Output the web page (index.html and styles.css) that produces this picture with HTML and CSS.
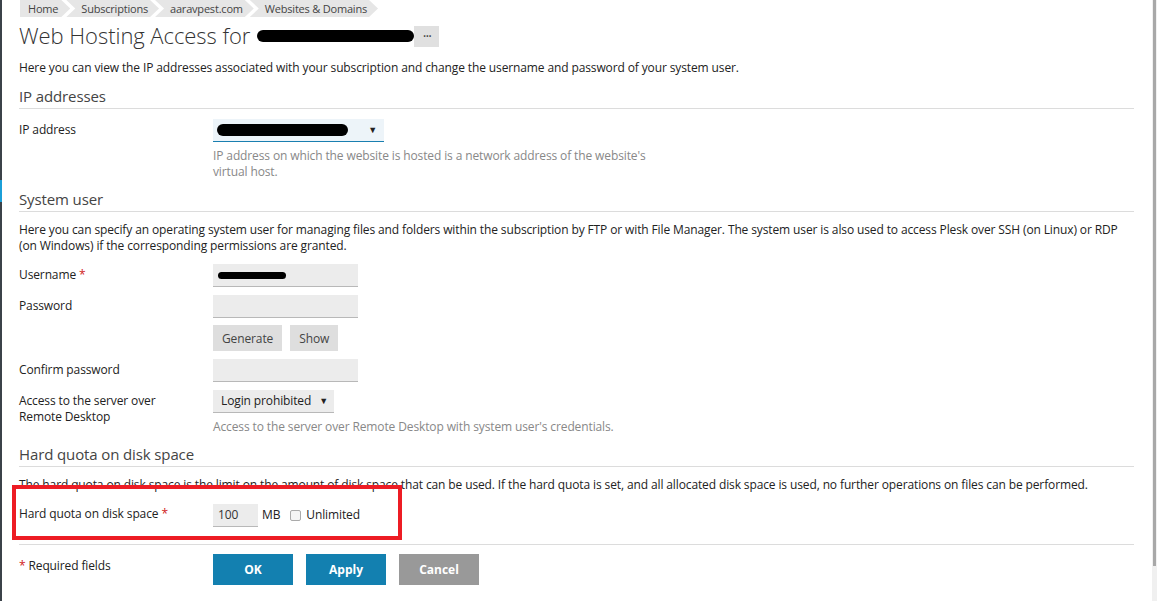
FILE: index.html
```html
<!DOCTYPE html>
<html lang="en">
<head>
    <meta charset="UTF-8">
    <title>Web Hosting Access</title>
    <link rel="stylesheet" href="styles.css">
</head>
<body>
    <div class="side-edge"><span class="side-active"></span></div>
    <div class="page">
        <ul class="breadcrumbs">
            <li>Home</li>
            <li>Subscriptions</li>
            <li>aaravpest.com</li>
            <li>Websites &amp; Domains</li>
        </ul>

        <h1 class="title">Web Hosting Access for <span class="redact title-redact"></span><span class="more">&middot;&middot;&middot;</span></h1>

        <p class="intro">Here you can view the IP addresses associated with your subscription and change the username and password of your system user.</p>

        <h2 class="section-title">IP addresses</h2>
        <div class="form-row">
            <label class="field-label">IP address</label>
            <div class="field">
                <div class="select select-ip"><span class="redact ip-redact"></span><span class="caret">&#9660;</span></div>
                <p class="hint">IP address on which the website is hosted is a network address of the website's<br>virtual host.</p>
            </div>
        </div>

        <h2 class="section-title">System user</h2>
        <p class="section-text">Here you can specify an operating system user for managing files and folders within the subscription by FTP or with File Manager. The system user is also used to access Plesk over SSH (on Linux) or RDP (on Windows) if the corresponding permissions are granted.</p>
        <div class="form-row">
            <label class="field-label">Username <span class="req">*</span></label>
            <div class="field"><div class="input"><span class="redact user-redact"></span></div></div>
        </div>
        <div class="form-row">
            <label class="field-label">Password</label>
            <div class="field">
                <div class="input"></div>
                <div class="btn-group">
                    <button class="btn">Generate</button>
                    <button class="btn">Show</button>
                </div>
            </div>
        </div>
        <div class="form-row">
            <label class="field-label">Confirm password</label>
            <div class="field"><div class="input"></div></div>
        </div>
        <div class="form-row">
            <label class="field-label">Access to the server over<br>Remote Desktop</label>
            <div class="field">
                <div class="select select-rdp">Login prohibited <span class="caret">&#9660;</span></div>
                <p class="hint">Access to the server over Remote Desktop with system user's credentials.</p>
            </div>
        </div>

        <h2 class="section-title">Hard quota on disk space</h2>
        <p class="section-text">The hard quota on disk space is the limit on the amount of disk space that can be used. If the hard quota is set, and all allocated disk space is used, no further operations on files can be performed.</p>
        <div class="form-row quota-row">
            <div class="highlight"></div>
            <label class="field-label">Hard quota on disk space <span class="req">*</span></label>
            <div class="field quota-field">
                <div class="input input-small">100</div>
                <span class="unit">MB</span>
                <span class="checkbox"></span>
                <span>Unlimited</span>
            </div>
        </div>

        <div class="form-footer">
            <div class="field-label"><span class="req">*</span> Required fields</div>
            <div class="actions">
                <button class="action primary">OK</button>
                <button class="action primary">Apply</button>
                <button class="action cancel">Cancel</button>
            </div>
        </div>
    </div>
    <div class="scrollbar"><div class="thumb"></div></div>
</body>
</html>
```

FILE: styles.css
```css
* {
    box-sizing: border-box;
    margin: 0;
    padding: 0;
}

body {
    font-family: "Open Sans", Arial, sans-serif;
    font-size: 12px;
    line-height: 16px;
    letter-spacing: -0.12px;
    color: #222;
    background-color: #fff;
    width: 1157px;
    height: 601px;
    overflow: hidden;
    position: relative;
}

.side-edge {
    position: absolute;
    left: 0;
    top: 0;
    width: 2px;
    height: 601px;
    background-color: #3b4249;
}

.side-active {
    position: absolute;
    left: 0;
    top: 180px;
    width: 2px;
    height: 22px;
    background-color: #1b9fd8;
}

.scrollbar {
    position: absolute;
    right: 0;
    top: 0;
    width: 5px;
    height: 601px;
    background-color: #f0f0f0;
}

.thumb {
    width: 3px;
    height: 566px;
    margin-left: 1px;
    background-color: #a8a8a8;
}

.page {
    padding-left: 19px;
    width: 1134px;
}

/* breadcrumbs */
.breadcrumbs {
    list-style: none;
    display: flex;
    height: 17px;
    margin-left: 1px;
}

.breadcrumbs li {
    background-color: #e6e6e6;
    color: #444;
    font-size: 11px;
    letter-spacing: -0.2px;
    line-height: 17px;
    padding: 0 11px 0 15px;
    margin-right: -4px;
    clip-path: polygon(0 0, calc(100% - 9px) 0, 100% 50%, calc(100% - 9px) 100%, 0 100%, 9px 50%);
}

.breadcrumbs li:first-child {
    padding-left: 8px;
    padding-right: 12px;
    clip-path: polygon(0 0, calc(100% - 9px) 0, 100% 50%, calc(100% - 9px) 100%, 0 100%);
}

/* title */
.title {
    font-size: 22px;
    font-weight: 300;
    color: #333;
    line-height: 28px;
    margin-top: 4px;
    display: flex;
    align-items: center;
    letter-spacing: -0.05px;
}

.redact {
    display: inline-block;
    background-color: #000;
    border-radius: 6px;
}

.title-redact {
    width: 157px;
    height: 12px;
    margin-left: 7px;
    margin-top: 2px;
}

.more {
    display: inline-block;
    width: 25px;
    height: 21px;
    background-color: #e0e0e0;
    color: #444;
    font-size: 14px;
    font-weight: 400;
    line-height: 19px;
    text-align: center;
    letter-spacing: -1px;
    margin-top: 3px;
}

.intro {
    margin-top: 11px;
}

/* sections */
.section-title {
    font-size: 15px;
    font-weight: 400;
    color: #444;
    line-height: 20px;
    border-bottom: 1px solid #dcdcdc;
    padding-bottom: 2px;
    margin-top: 9px;
    margin-bottom: 10px;
}

.section-title:first-of-type {
    margin-top: 10px;
}

.section-text {
    margin-top: 0;
    margin-bottom: 10px;
}

.form-row {
    display: flex;
    margin-bottom: 8px;
    position: relative;
}

.field-label {
    width: 194px;
    flex-shrink: 0;
    padding-top: 3px;
}

.req {
    color: #d02020;
}

.field {
    flex: 1;
}

.input {
    width: 145px;
    height: 23px;
    background-color: #ececec;
    border-bottom: 1px solid #b8b8b8;
    padding: 3px 5px;
    color: #333;
}

.user-redact {
    width: 68px;
    height: 7px;
    margin-top: 4px;
}

.btn-group {
    display: flex;
    gap: 8px;
    margin-top: 7px;
}

.btn {
    font-family: inherit;
    font-size: 12px;
    letter-spacing: -0.12px;
    color: #444;
    background-color: #dedede;
    border: none;
    height: 26px;
    padding: 0 9px;
}

.select {
    display: inline-flex;
    align-items: center;
    height: 23px;
    background-color: #ececec;
    border-bottom: 1px solid #b8b8b8;
    padding: 0 6px 0 8px;
    color: #222;
}

.select-ip {
    width: 171px;
    background-color: #edf4f9;
    border-bottom: 1px solid #1a7fb0;
    padding-left: 4px;
}

.ip-redact {
    width: 131px;
    height: 12px;
}

.caret {
    font-size: 9px;
    margin-left: auto;
    padding-left: 8px;
    color: #222;
}

.select-ip .caret {
    padding-right: 1px;
}

.hint {
    color: #888;
    margin-top: 6px;
}

/* quota */
.quota-row {
    margin-top: 10px;
}

.quota-field {
    display: flex;
    align-items: center;
    height: 24px;
}

.input-small {
    width: 45px;
    padding-left: 5px;
}

.unit {
    margin-left: 4px;
    margin-right: 10px;
}

.checkbox {
    display: inline-block;
    width: 11px;
    height: 11px;
    border: 1px solid #aaa;
    border-radius: 2px;
    background-color: #f4f4f4;
    margin-right: 5px;
}

.highlight {
    position: absolute;
    left: -7px;
    top: -18px;
    width: 390px;
    height: 55px;
    border: 4px solid #ed1c24;
    pointer-events: none;
}

.form-footer {
    display: flex;
    border-top: 1px solid #dcdcdc;
    margin-top: 17px;
    padding-top: 9px;
}

.form-footer .field-label {
    padding-top: 4px;
}

.actions {
    display: flex;
    gap: 13px;
}

.action {
    font-family: inherit;
    font-size: 12px;
    font-weight: 700;
    color: #fff;
    border: none;
    width: 80px;
    height: 31px;
}

.primary {
    background-color: #1380b0;
}

.cancel {
    background-color: #999;
}
```
